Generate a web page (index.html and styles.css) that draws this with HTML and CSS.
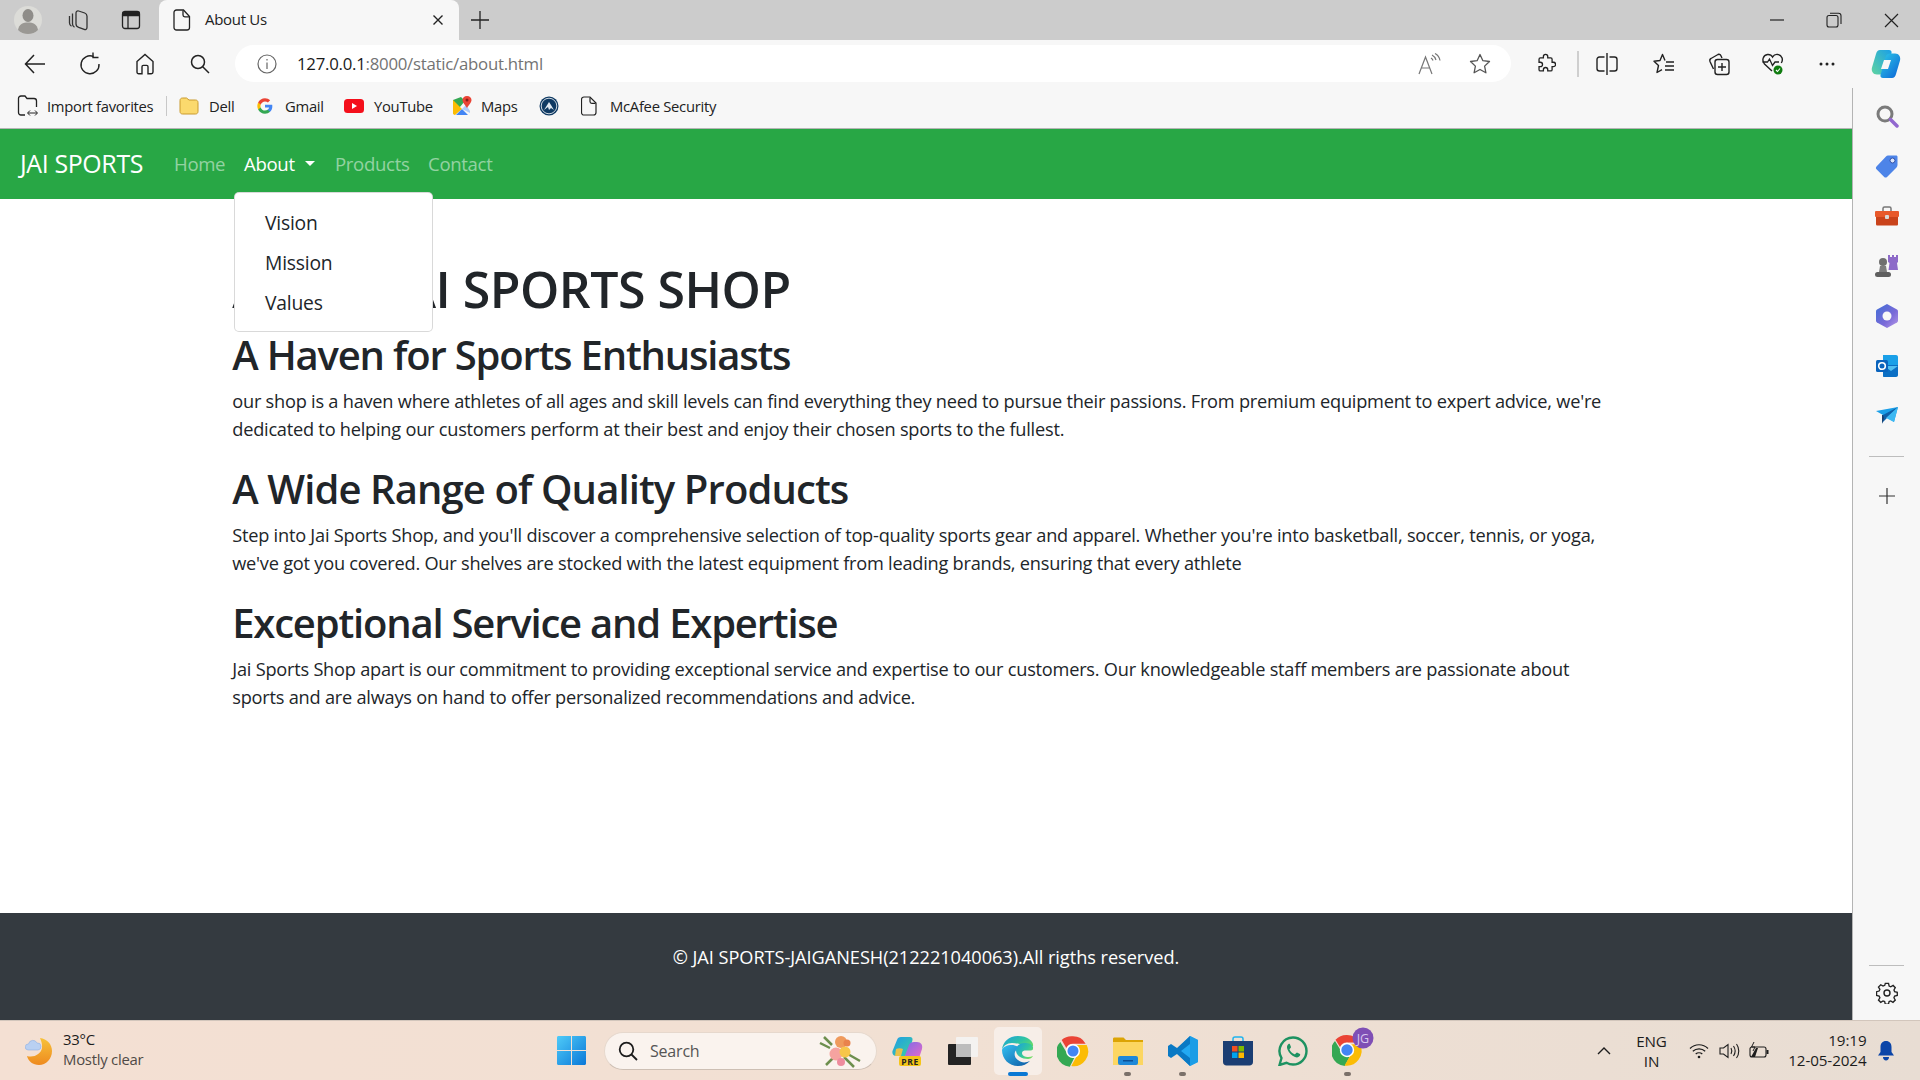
FILE: index.html
```html
<!DOCTYPE html>
<html lang="en">
<head>
<meta charset="utf-8">
<title>About Us</title>
<link rel="stylesheet" href="styles.css">
</head>
<body>
<div class="tabstrip">
  <div class="cell c50"><svg width="30" height="30" viewBox="0 0 30 30"><circle cx="15" cy="15" r="14" fill="#dcdcd8"/><ellipse cx="15" cy="10.5" rx="5.5" ry="6.5" fill="#8f8d89"/><path d="M5 25c1-6 5-7.500 10-7.500s9 1.500 10 7.500c-2.500 2.500-6 4-10 4s-7.500-1.500-10-4z" fill="#9a9894"/></svg></div>
  <div class="cell c50"><svg width="24" height="24" viewBox="0 0 24 24" fill="none" stroke="#333" stroke-width="1.300"><path d="M3.500 8v7c0 1.500.8 2.500 2 3.200"/><path d="M6.500 5.500v10.500c0 1.500.8 2.500 2 3.200"/><path d="M10 5c0-1.500 1.200-2.500 2.700-2l6 2c1.300.5 2.300 1.700 2.300 3.200v11c0 1.800-1.300 2.800-2.800 2.200l-5.500-2c-1.500-.6-2.700-1.800-2.700-3.400z"/></svg></div>
  <div class="cell c54"><svg width="20" height="20" viewBox="0 0 20 20" fill="none" stroke="#222" stroke-width="1.300"><rect x="1.500" y="1.500" width="17" height="17" rx="2.500"/><path d="M7 5.500v13"/><path d="M2 2.500h16v3H2z" fill="#222"/></svg></div>
  <div class="tab">
    <svg class="tab-doc" width="18" height="22" viewBox="0 0 18 22" fill="none" stroke="#222" stroke-width="1.300"><path d="M3.500 1h7l6 6.500v11c0 1.400-1 2.500-2.500 2.500H3.500C2 21 1 19.900 1 18.500v-15C1 2 2 1 3.500 1z"/><path d="M10 1.500V6c0 1 .8 1.800 1.800 1.800H16"/></svg>
    <span class="tab-title">About Us</span>
    <svg class="tab-close" width="12" height="12" viewBox="0 0 12 12" stroke="#222" stroke-width="1.400"><path d="M1.500 1.500l9 9M10.500 1.500l-9 9"/></svg>
  </div>
  <div class="cell new"><svg width="18" height="18" viewBox="0 0 18 18" stroke="#222" stroke-width="1.300"><path d="M9 0v18M0 9h18"/></svg></div>
  <div class="winctl">
    <div class="cell c57"><svg width="14" height="2" viewBox="0 0 14 2"><path d="M0 1h14" stroke="#222" stroke-width="1.200"/></svg></div>
    <div class="cell c57"><svg width="16" height="16" viewBox="0 0 16 16" fill="none" stroke="#222" stroke-width="1.100"><rect x="1" y="3.500" width="11" height="11.500" rx="2"/><path d="M4 1.200h8.500c1.400 0 2.500 1 2.500 2.500V12"/></svg></div>
    <div class="cell c58"><svg width="15" height="15" viewBox="0 0 15 15" stroke="#222" stroke-width="1.200"><path d="M1 1l13 13M14 1L1 14"/></svg></div>
  </div>
</div>

<div class="toolbar">
  <div class="cell c55"><svg width="22" height="20" viewBox="0 0 22 20" fill="none" stroke="#222" stroke-width="1.500"><path d="M10 1L1.500 10l8.500 9M1.500 10H21"/></svg></div>
  <div class="cell c55"><svg width="22" height="24" viewBox="0 0 22 24" fill="none" stroke="#222" stroke-width="1.400"><path d="M14.500 4.500A9 9 0 1 0 20 12"/><path d="M14 .5v5h5.500"/></svg></div>
  <div class="cell c55"><svg width="20" height="22" viewBox="0 0 20 22" fill="none" stroke="#222" stroke-width="1.400"><path d="M2 8.500L10 1.500l8 7V19c0 1-.7 1.700-1.700 1.700H13v-7c0-.8-.5-1.300-1.300-1.300H8.300c-.8 0-1.300.5-1.300 1.300v7H3.700C2.700 20.700 2 20 2 19z"/></svg></div>
  <div class="cell c55"><svg width="20" height="20" viewBox="0 0 20 20" fill="none" stroke="#222" stroke-width="1.500"><circle cx="8" cy="8" r="6.500"/><path d="M12.700 12.700L19 19"/></svg></div>
  <div class="address">
    <svg class="info" width="20" height="20" viewBox="0 0 20 20" fill="none" stroke="#666" stroke-width="1.200"><circle cx="10" cy="10" r="9"/><path d="M10 8.500v6.500M10 5v1.500"/></svg>
    <span class="url"><b>127.0.0.1</b>:8000/static/about.html</span>
    <svg class="read" width="24" height="22" viewBox="0 0 24 22" fill="none" stroke="#777" stroke-width="1.200"><path d="M1 21L7.500 4 14 21M3.500 15h8"/><path d="M14 2c2 1 3.500 3 4 5M17 .5c2.500 1.300 4.500 4 5 7M13 5c1 .6 1.700 1.400 2 2.500"/></svg>
    <svg class="fav" width="22" height="22" viewBox="0 0 22 22" fill="none" stroke="#555" stroke-width="1.300"><path d="M11 1.500l2.900 6.200 6.600.8-4.900 4.600 1.300 6.700L11 16.500l-5.900 3.300 1.300-6.700L1.500 8.500l6.600-.8z" stroke-linejoin="round"/></svg>
  </div>
  <div class="cell t-ext"><svg width="20" height="22" viewBox="1 0 23 23" fill="none" stroke="#222" stroke-width="1.500"><path d="M9.500 3a2.500 2.500 0 0 1 5 0v1.500h3.500A1.500 1.500 0 0 1 19.500 6v3.500H21a2.500 2.500 0 0 1 0 5h-1.500V18a1.500 1.500 0 0 1-1.500 1.500h-3.500V18a2.500 2.500 0 0 0-5 0v1.500H6A1.500 1.500 0 0 1 4.500 18v-3.500H6a2.500 2.500 0 0 0 0-5H4.500V6A1.500 1.500 0 0 1 6 4.500h3.500z"/></svg></div>
  <div class="tsep"></div>
  <div class="cell t-split"><svg width="22" height="22" viewBox="0 0 22 22" fill="none" stroke="#222" stroke-width="1.400"><path d="M11 0v22"/><path d="M8.500 4H3.500C2 4 1 5 1 6.500v9C1 17 2 18 3.500 18h5M13.500 4h5C20 4 21 5 21 6.500v9c0 1.500-1 2.500-2.500 2.500h-5"/></svg></div>
  <div class="cell t-favs"><svg width="22" height="22" viewBox="0 0 22 22" fill="none" stroke="#222" stroke-width="1.400"><path d="M12 7.500L9.500 1.500 7 7.500l-6 .7 4.500 4.300L4 19.500l5-2.800" stroke-linejoin="round"/><path d="M13 9h8M12 13h9M12 17h9"/></svg></div>
  <div class="cell t-coll"><svg width="22" height="24" viewBox="0 0 22 24" fill="none" stroke="#222" stroke-width="1.400"><path d="M5.500 17L2 9.500C1.500 8 2 7 3 6.500L10 2.500c1-.5 2.300 0 2.800 1L14 6"/><rect x="7" y="7.500" width="14" height="15" rx="2.500"/><path d="M14 11v8M10 15h8"/></svg></div>
  <div class="cell t-health"><svg width="24" height="24" viewBox="0 0 24 24" fill="none"><path d="M11 19L3.500 12C.5 8.500 2 3 6.500 2.500 9 2.300 11 4 11.500 5 12.500 3.500 14.500 2 17 2.500c4 .6 5.500 5 3.300 8.500" stroke="#222" stroke-width="1.400"/><path d="M1.500 10h5l2-3 3 6.500 2.500-3.500h4" stroke="#222" stroke-width="1.300"/><circle cx="17" cy="18" r="4.500" fill="#107c10"/><path d="M15 18l1.500 1.500 2.500-3" stroke="#fff" stroke-width="1.100"/></svg></div>
  <div class="cell t-more"><svg width="16" height="4" viewBox="0 0 16 4" fill="#222"><circle cx="2" cy="2" r="1.500"/><circle cx="8" cy="2" r="1.500"/><circle cx="14" cy="2" r="1.500"/></svg></div>
  <div class="cell t-cop"><svg width="30" height="32" viewBox="0 0 30 32"><defs><linearGradient id="cp1" x1="0" y1="0" x2="1" y2="1"><stop offset="0" stop-color="#2ecbe8"/><stop offset="1" stop-color="#0b62d6"/></linearGradient><linearGradient id="cp2" x1="0" y1="1" x2="1" y2="0"><stop offset="0" stop-color="#5fd4a0"/><stop offset="1" stop-color="#1a9fe8"/></linearGradient></defs><path d="M9 2h9c2 0 3 1.500 2.500 3L15 24c-.6 2-2 2.500-4 2.500H6C2 26.500 0 23 1 19.500L5 6C5.700 3.500 7 2 9 2z" fill="url(#cp2)"/><path d="M21 5.500h3c4 0 6 3.500 5 7L25 26c-.7 2.500-2 4-4 4h-9c-2 0-3-1.500-2.500-3L15 8c.6-2 3-2.500 6-2.500z" fill="url(#cp1)"/><path d="M13 12h7l-3 9h-7z" fill="#f7f7f7"/></svg></div>
</div>

<div class="workarea">
  <div class="page">
    <div class="favbar">
      <svg class="f-imp" width="22" height="22" viewBox="0 0 22 22" fill="none" stroke="#222" stroke-width="1.300"><path d="M8 20H4c-1.500 0-2.500-1-2.500-2.500v-14C1.500 2 2.500 1 4 1h4l2 2.500h7c1.500 0 2.500 1 2.500 2.500v6"/><path d="M11 18h9M13 15.500L10.500 18l2.500 2.500M18 15.500l2.500 2.500-2.500 2.500" stroke-width="1"/></svg>
      <span class="f-t w-imp">Import favorites</span>
      <i class="f-sep"></i>
      <svg class="f-dell" width="20" height="18" viewBox="0 0 20 18"><path d="M1 3.500C1 2 2 1 3.500 1h4L10 3h6.500C18 3 19 4 19 5.500v9c0 1.500-1 2.500-2.500 2.500h-13C2 17 1 16 1 14.500z" fill="#fbd96d" stroke="#c99a2e"/></svg>
      <span class="f-t w-dell">Dell</span>
      <svg class="f-g" width="16" height="16" viewBox="0 0 48 48"><path fill="#4285F4" d="M46 24.500c0-1.600-.1-3.100-.4-4.500H24v8.500h12.400c-.5 2.900-2.100 5.300-4.600 7v5.800h7.400c4.300-4 6.800-9.900 6.800-16.800z"/><path fill="#34A853" d="M24 47c6.200 0 11.400-2 15.200-5.600l-7.400-5.800c-2 1.400-4.700 2.200-7.800 2.200-6 0-11.100-4-12.900-9.500H3.400v5.900C7.200 41.800 15 47 24 47z"/><path fill="#FBBC05" d="M11.100 28.300c-.5-1.400-.7-2.800-.7-4.300s.3-2.900.7-4.300v-5.900H3.400C1.900 16.900 1 20.300 1 24s.9 7.100 2.400 10.200z"/><path fill="#EA4335" d="M24 10.200c3.400 0 6.400 1.200 8.800 3.400l6.600-6.600C35.400 3.300 30.200 1 24 1 15 1 7.200 6.200 3.400 13.800l7.700 5.900C12.900 14.200 18 10.200 24 10.200z"/></svg>
      <span class="f-t w-gm">Gmail</span>
      <svg class="f-yt" width="20" height="14" viewBox="0 0 20 14"><rect width="20" height="14" rx="3.500" fill="#f40f1b"/><path d="M8 4l5 3-5 3z" fill="#fff"/></svg>
      <span class="f-t w-yt">YouTube</span>
      <svg class="f-map" width="20" height="20" viewBox="0 0 20 20"><path d="M1 4l8-3 4 4L2 18 1 17z" fill="#34a853"/><path d="M1 4l9 9-7 6c-1 0-2-.8-2-2z" fill="#fbbc04"/><path d="M10 13l6 6H4z" fill="#4285f4"/><path d="M10 13l4-4 4 6v2z" fill="#aecbfa"/><path d="M15 0c2.800 0 4.500 2 4.500 4 0 3-3 5-4.500 8-1.500-3-4.500-5-4.500-8 0-2 1.700-4 4.500-4z" fill="#ea4335"/><circle cx="15" cy="4" r="1.500" fill="#8b1f17"/></svg>
      <span class="f-t w-map">Maps</span>
      <svg class="f-circ" width="20" height="20" viewBox="0 0 20 20"><circle cx="10" cy="10" r="9.500" fill="#0f3a63"/><circle cx="10" cy="10" r="7.800" fill="none" stroke="#fff" stroke-width=".8"/><path d="M5 14l5-8 2 3 3 5-3-2-2 2-1-3z" fill="#dfe8f0"/></svg>
      <svg class="f-doc" width="16" height="20" viewBox="0 0 16 20" fill="none" stroke="#222" stroke-width="1.200"><path d="M3 1h6l6 6v9.500c0 1.400-1 2.500-2.500 2.500H3c-1.400 0-2.500-1-2.500-2.500v-13C.5 2 1.600 1 3 1z"/><path d="M9 1.500V5.500c0 1 .7 1.800 1.800 1.800H14.500"/></svg>
      <span class="f-t w-mc">McAfee Security</span>
    </div>
    <nav class="navbar">
      <a class="brand">JAI SPORTS</a>
      <a class="nav-link link-home">Home</a>
      <a class="nav-link active link-about">About<i class="caret"></i></a>
      <a class="nav-link link-prod">Products</a>
      <a class="nav-link">Contact</a>
      <div class="dropdown">
        <a class="drop-item">Vision</a>
        <a class="drop-item">Mission</a>
        <a class="drop-item">Values</a>
      </div>
    </nav>
    <main class="content">
      <div class="container">
        <h1>About JAI SPORTS SHOP</h1>
        <h2>A Haven for Sports Enthusiasts</h2>
        <p>our shop is a haven where athletes of all ages and skill levels can find everything they need to pursue their passions. From premium equipment to expert advice, we're dedicated to helping our customers perform at their best and enjoy their chosen sports to the fullest.</p>
        <h2 class="h-wide">A Wide Range of Quality Products</h2>
        <p>Step into Jai Sports Shop, and you'll discover a comprehensive selection of top-quality sports gear and apparel. Whether you're into basketball, soccer, tennis, or yoga, we've got you covered. Our shelves are stocked with the latest equipment from leading brands, ensuring that every athlete</p>
        <h2>Exceptional Service and Expertise</h2>
        <p>Jai Sports Shop apart is our commitment to providing exceptional service and expertise to our customers. Our knowledgeable staff members are passionate about sports and are always on hand to offer personalized recommendations and advice.</p>
      </div>
    </main>
    <footer class="footer">© JAI SPORTS-JAIGANESH(212221040063).All rigths reserved.</footer>
  </div>
  <aside class="sidebar">
    <div class="side-top">
      <div class="side-i"><svg width="24" height="24" viewBox="0 0 24 24" fill="none"><circle cx="10" cy="10" r="7" stroke="#7b7b7b" stroke-width="3"/><path d="M15.500 15.500L22 22" stroke="#9268cf" stroke-width="3.500" stroke-linecap="round"/></svg></div>
      <div class="side-i"><svg width="24" height="24" viewBox="0 0 24 24"><path d="M13 1.500h8c1 0 1.500.5 1.500 1.500v8c0 1-.4 1.800-1 2.400L12 23c-.8.700-2 .7-2.800 0L1.500 15.300c-.8-.8-.8-2 0-2.800L11 2.500c.6-.6 1.200-1 2-1z" fill="#4d84e8"/><circle cx="17.500" cy="6.500" r="2.500" fill="#dbe6fb" stroke="#2f4fa8"/></svg></div>
      <div class="side-i"><svg width="24" height="20" viewBox="0 0 24 20"><path d="M8 5V2.500C8 1.500 8.500 1 9.500 1h5c1 0 1.500.5 1.500 1.500V5" fill="none" stroke="#777" stroke-width="1.500"/><rect y="5" width="24" height="6" rx="1" fill="#e8592b"/><path d="M1 11h22v7c0 1-.5 1.500-1.500 1.500h-19c-1 0-1.500-.5-1.500-1.500z" fill="#c9431b"/><rect x="10" y="9" width="4" height="4" rx="1" fill="#d9d9d9"/></svg></div>
      <div class="side-i"><svg width="24" height="24" viewBox="0 0 24 24"><path d="M13 1h2v2h2V1h2v2h2V1h2v7l-1 1 1 7H13.500l1-7-1.500-1z" fill="#8d6ac8"/><circle cx="8" cy="8" r="4" fill="#6f6f6f"/><path d="M5 12h6l1 6H4z" fill="#7d7d7d"/><rect x="0" y="18" width="16" height="5" rx="2.500" fill="#5f5f5f"/></svg></div>
      <div class="side-i"><svg width="22" height="24" viewBox="0 0 22 24"><defs><linearGradient id="m3" x1="0" y1="0" x2="1" y2="1"><stop offset="0" stop-color="#3f6ed6"/><stop offset=".6" stop-color="#7a6ad8"/><stop offset="1" stop-color="#b79ae8"/></linearGradient></defs><path d="M11 0l10 5.500c.7.400 1 1 1 1.800v9.400c0 .8-.3 1.400-1 1.800L11 24 1 18.500c-.7-.4-1-1-1-1.800V7.300c0-.8.300-1.400 1-1.800z" fill="url(#m3)"/><circle cx="11" cy="12" r="4.500" fill="#f7f7f7"/></svg></div>
      <div class="side-i"><svg width="22" height="22" viewBox="0 0 22 22"><path d="M7 0h13c1 0 2 .8 2 2v8L7 10z" fill="#1aa0e8"/><path d="M7 10l15 0v10c0 1-.8 2-2 2H8c-.8 0-1-.5-1-1z" fill="#0b6fc4"/><path d="M8 11l14 0-7 5z" fill="#50bff0"/><rect y="5" width="12" height="12" rx="1.500" fill="#0a64bd"/><circle cx="6" cy="11" r="3.300" fill="none" stroke="#fff" stroke-width="1.600"/></svg></div>
      <div class="side-i"><svg width="22" height="18" viewBox="0 0 22 18"><path d="M0 4l22-4-4 15L7 8z" fill="#1a9fe8"/><path d="M7 8L22 0 6 16z" fill="#0e5fa8"/><path d="M6 8l1 0 1 3-2 6z" fill="#173f6f"/><path d="M10 11l8 4L22 0z" fill="#3cb8f2"/></svg></div>
      <div class="side-div"></div>
      <div class="side-plus"><svg width="16" height="16" viewBox="0 0 16 16" stroke="#333" stroke-width="1.200"><path d="M8 0v16M0 8h16"/></svg></div>
    </div>
    <div class="side-bottom">
      <div class="side-div"></div>
      <div class="side-gear"><svg width="22" height="22" viewBox="0 0 22 22" fill="none" stroke="#222" stroke-width="1.400"><circle cx="11" cy="11" r="3"/><path d="M9.300 1.500h3.400l.6 2.800 1.700.8 2.500-1.400 2.300 2.400-1.400 2.400.7 1.800 2.800.7v3.300l-2.800.7-.7 1.700 1.400 2.400-2.400 2.400-2.400-1.500-1.700.7-.7 2.800h-3.300l-.7-2.800-1.700-.7-2.400 1.500-2.400-2.400 1.500-2.400-.8-1.700-2.700-.7V10.300l2.700-.7.800-1.800-1.500-2.400 2.400-2.400 2.400 1.400 1.800-.8z" transform="scale(.95) translate(.5 -.1)"/></svg></div>
    </div>
  </aside>
</div>

<div class="taskbar">
  <div class="weather">
    <svg width="28" height="30" viewBox="0 0 28 30"><defs><linearGradient id="mo" x1="0" y1="0" x2="0" y2="1"><stop offset="0" stop-color="#f7c23a"/><stop offset="1" stop-color="#ee8a1f"/></linearGradient></defs><path d="M15 2c7 1 12 6 12 13 0 8-6 14-13 14-6 0-11-4-12-9 7 2 14-2 15-8 .4-3-.5-7-2-10z" fill="url(#mo)"/><path d="M3 14a3 3 0 0 1 .5-6 4.500 4.500 0 0 1 8.500-1 3.500 3.500 0 0 1 1 7z" fill="#b9d0f2" stroke="#8fb0e3" stroke-width=".6"/></svg>
    <div class="w-text"><div class="w-temp">33°C</div><div class="w-desc">Mostly clear</div></div>
  </div>
  <div class="tb-center">
    <svg class="start" width="29" height="29" viewBox="0 0 29 29"><defs><linearGradient id="w1" x1="0" y1="0" x2="1" y2="1"><stop offset="0" stop-color="#4fcbf8"/><stop offset="1" stop-color="#0a78d8"/></linearGradient></defs><path d="M0 1.500C0 .6.600 0 1.500 0H14v14H0zM15 0h12.500c.9 0 1.500.6 1.500 1.500V14H15zM0 15h14v14H1.500C.6 29 0 28.400 0 27.500zM15 15h14v12.500c0 .9-.6 1.500-1.500 1.500H15z" fill="url(#w1)"/></svg>
    <div class="search">
      <svg width="20" height="20" viewBox="0 0 20 20" fill="none" stroke="#1c1c1c" stroke-width="1.800"><circle cx="8.500" cy="8.500" r="6.800"/><path d="M13.500 13.500L19 19"/></svg>
      <span class="search-t">Search</span>
      <svg class="flower" width="44" height="36" viewBox="0 0 44 36"><path d="M6 4l8 8M2 10l10 5M36 34l-10-10M42 28l-14-8M8 32l8-8" stroke="#6d8f4e" stroke-width="2.500"/><circle cx="23" cy="9" r="6" fill="#ef9a5c"/><circle cx="18" cy="21" r="6.500" fill="#f5a3a0"/><circle cx="27" cy="19" r="5.500" fill="#f7c64a"/><circle cx="23" cy="29" r="4" fill="#ee8c9e"/><circle cx="29" cy="10" r="3.500" fill="#e9824c"/></svg>
    </div>
    <div class="tb-app a-cop"><svg width="32" height="32" viewBox="0 0 32 32"><defs><linearGradient id="pa" x1="0" y1="0" x2="1" y2="1"><stop offset="0" stop-color="#1e9be8"/><stop offset="1" stop-color="#3dd0a0"/></linearGradient><linearGradient id="pb" x1="0" y1="0" x2="1" y2="1"><stop offset="0" stop-color="#7c6ce8"/><stop offset="1" stop-color="#e86ac8"/></linearGradient></defs><path d="M9 2h9c2 0 3 1.500 2.400 3.500L16 21H4c-3 0-4-3-3.500-5L5 5C5.500 3 7 2 9 2z" fill="url(#pa)"/><path d="M4 14c2-1 5-1 7 0l-2 7H3z" fill="#e8c14a"/><path d="M22 7h3c4 0 6 3 5 7l-3 9H12l5-13c.6-2 3-3 5-3z" fill="url(#pb)"/><rect x="7" y="21" width="22" height="10" rx="2" fill="#f5c518"/><text class="pre" x="18" y="29.500" text-anchor="middle">PRE</text></svg></div>
    <div class="tb-app a-stack"><svg width="30" height="30" viewBox="0 0 30 30"><rect x="0" y="8" width="23" height="21" rx="1" fill="#232323"/><rect x="8" y="1" width="22" height="20" rx="1" fill="#f4f2f0"/><rect x="8" y="8" width="15" height="13" fill="#bdbdbd"/></svg></div>
    <div class="tb-app a-edge"><svg width="32" height="32" viewBox="0 0 32 32"><defs><linearGradient id="e1" x1="0" y1="0" x2="1" y2="1"><stop offset="0" stop-color="#35c1f1"/><stop offset="1" stop-color="#0c59a4"/></linearGradient><linearGradient id="e2" x1="0" y1="0" x2="1" y2=".7"><stop offset="0" stop-color="#1b9de2"/><stop offset=".6" stop-color="#30c6a0"/><stop offset="1" stop-color="#6fdc5f"/></linearGradient></defs><path d="M16 1C7 1 .5 7 0 15c1-4 5-7 10-7 6 0 13 3 16 3h5C32 7 26 1 16 1z" fill="url(#e2)"/><path d="M0 15c0 9 7 16 16 16 5 0 9-2 12-5-4 2-9 2-12-1-3-2-4-5-3-8 1-2 3-4 5-4-3-2-6-3-8-3C5 10 .5 12 0 15z" fill="url(#e1)"/><path d="M31 14c1-5-4-6-9-6-4 0-8 3-8 7 0 6 6 9 12 9 2 0 4-1 5-3-4 2-11 1-11-3 0-2 2-2.500 4-2.500 3 0 7 .5 7-1.500z" fill="url(#e2)"/></svg></div>
    <div class="tb-app"><svg width="32" height="32" viewBox="0 0 48 48"><path d="M24 2a22 22 0 0 1 19 11H24a11 11 0 0 0-10 6.500L7 7.500A22 22 0 0 1 24 2z" fill="#ea4335"/><path d="M5 10.500l10 17a11 11 0 0 0 11 6.500l-6.800 13.500A22 22 0 0 1 5 10.500z" fill="#34a853"/><path d="M44.500 15a22 22 0 0 1-23 31.500L31 29a11 11 0 0 0-1.500-14z" fill="#fbbc05"/><circle cx="24" cy="24" r="10.500" fill="#fff"/><circle cx="24" cy="24" r="8.300" fill="#4285f4"/></svg></div>
    <div class="tb-app"><svg width="30" height="28" viewBox="0 0 30 28"><path d="M0 2c0-1 .5-1.500 1.500-1.500h9L13 3h17v5H0z" fill="#dca405"/><path d="M0 5h30v23H0z" fill="#fcd661"/><rect x="5" y="19" width="20" height="9" rx="2" fill="#1e88d8"/><rect x="10" y="23" width="10" height="1.500" fill="#0b4f95"/></svg></div>
    <div class="tb-app"><svg width="30" height="30" viewBox="0 0 30 30"><path d="M22 0l8 4v22l-8 4L7 15.500z" fill="#23a9f2"/><path d="M22 0L9 12 3 8 0 10v10l3 2 6-4 13 12V22L13 15l9-7z" fill="#0a79c4"/><path d="M22 0l8 4v22l-8 4z" fill="#1c9de6"/></svg></div>
    <div class="tb-app"><svg width="30" height="30" viewBox="0 0 30 30"><path d="M10 5V3c0-1 .6-2 2-2h6c1.400 0 2 1 2 2v2" fill="none" stroke="#21b4ee" stroke-width="1.500"/><path d="M0 5h30v21c0 2-1.500 3.500-3.500 3.500h-23C1.500 29.500 0 28 0 26z" fill="#1b3e73"/><rect x="9" y="10" width="5.500" height="5.500" fill="#f25022"/><rect x="15.500" y="10" width="5.500" height="5.500" fill="#7fba00"/><rect x="9" y="16.500" width="5.500" height="5.500" fill="#00a4ef"/><rect x="15.500" y="16.500" width="5.500" height="5.500" fill="#ffb900"/></svg></div>
    <div class="tb-app"><svg width="30" height="30" viewBox="0 0 30 30" fill="none"><path d="M15 1.500a13.500 13.500 0 0 1 0 27c-2.400 0-4.500-.6-6.500-1.700L1.500 29l2-7A13.500 13.500 0 0 1 15 1.500z" stroke="#1d9261" stroke-width="2.400"/><path d="M10.500 8c-1.500 1-2 3-1 5.500 1.500 3.500 4 6 7.500 7.500 2.500 1 4 0 5-1.500.3-.7.300-1.300 0-1.600l-3-1.400c-.5 0-1 .8-1.700 1.500-.4.300-.8.300-1.300 0-2-1-3.500-2.500-4.500-4.500 0-.5.600-1 1.300-1.800.2-.4.200-.8 0-1.200L11.800 8c-.3-.3-.8-.3-1.300 0z" fill="#1d9261"/></svg></div>
    <div class="tb-app a-chr2"><svg width="42" height="40" viewBox="0 0 42 40"><g transform="translate(0 8)"><path d="M15 0a15 15 0 0 1 13 7.500H15a7.500 7.500 0 0 0-7 4.500L3.500 4.800A15 15 0 0 1 15 0z" fill="#ea4335"/><path d="M3 6l7 11.500a7.500 7.500 0 0 0 7.500 4.500L12.800 31A15 15 0 0 1 3 6z" fill="#34a853"/><path d="M28 9a15 15 0 0 1-15.500 21.500L19.200 19a7.500 7.500 0 0 0-1-9.500z" fill="#fbbc05"/><circle cx="15" cy="15" r="7.200" fill="#fff"/><circle cx="15" cy="15" r="5.700" fill="#4285f4"/></g><circle cx="31" cy="11" r="10.500" fill="#7f4fb5"/><text class="jg" x="31" y="15.500" text-anchor="middle">JG</text></svg></div>
  </div>
  <div class="tray">
    <svg class="chev" width="14" height="8" viewBox="0 0 14 8" fill="none" stroke="#1c1c1c" stroke-width="1.400"><path d="M1 7l6-6 6 6"/></svg>
    <div class="lang"><div>ENG</div><div>IN</div></div>
    <svg class="wifi" width="20" height="16" viewBox="0 0 20 16" fill="none" stroke="#1c1c1c" stroke-width="1.200"><path d="M1 5.500c5-5 13-5 18 0M3.800 8.300c3.500-3.300 9-3.300 12.400 0M6.700 11c1.800-1.600 4.800-1.600 6.600 0"/><circle cx="10" cy="14" r="1.300" fill="#1c1c1c" stroke="none"/></svg>
    <svg class="vol" width="21" height="18" viewBox="0 0 21 18" fill="none" stroke="#1c1c1c" stroke-width="1.100"><path d="M1 6h3.500L9 2.500v13L4.500 12H1z"/><path d="M12 6c1 1.800 1 4.200 0 6M14.500 4c2 3 2 7 0 10M17.500 2c3 4 3 10 0 14"/></svg>
    <svg class="batt" width="20" height="18" viewBox="0 0 20 18" fill="none"><rect x="1" y="5" width="16" height="10" rx="2" stroke="#1c1c1c" stroke-width="1.100"/><rect x="17.500" y="8" width="2" height="4" fill="#1c1c1c"/><path d="M2 15h4l3-9H7z" fill="#1c1c1c"/><path d="M5 0L2.500 5H6L4 9" stroke="#1c1c1c" stroke-width="1"/></svg>
    <div class="clock"><div>19:19</div><div>12-05-2024</div></div>
    <svg class="bell" width="16" height="20" viewBox="0 0 16 20"><path d="M8 0c3.500 0 5.500 2.500 5.500 6v5l2.500 3.500H0L2.500 11V6C2.500 2.500 4.500 0 8 0z" fill="#0b45a8"/><path d="M5 16h6c0 2-1.300 3.500-3 3.500S5 18 5 16z" fill="#0b45a8"/></svg>
  </div>
</div>
</body>
</html>
```
FILE: styles.css
```css
* { box-sizing: border-box; }
html, body { margin: 0; height: 100%; }
body {
  width: 1920px;
  height: 1080px;
  overflow: hidden;
  display: flex;
  flex-direction: column;
  font-family: "Open Sans", "Noto Sans", sans-serif;
  color: #212529;
  background: #fff;
}
svg { display: block; flex: none; }
.cell { display: flex; align-items: center; justify-content: center; flex: none; height: 100%; }
.c50 { width: 50px; }
.c54 { width: 56px; }
.c55 { width: 55px; }
.c57 { width: 57px; }
.c58 { width: 58px; }

.tabstrip { height: 40px; flex: none; display: flex; align-items: stretch; background: #cccccc; padding-left: 3px; }
.tab {
  width: 300px; background: #f7f7f7; border-radius: 8px 8px 0 0;
  display: flex; align-items: center; padding: 0 15px 0 14px; flex: none;
}
.tab-title { font-size: 15px; letter-spacing: -.3px; margin: 0 0 2px 14px; color: #222; flex: 1; }
.new { width: 42px; }
.winctl { margin-left: auto; display: flex; height: 100%; width: 172px; }

.toolbar { height: 48px; flex: none; display: flex; align-items: center; background: #f7f7f7; padding-left: 7.5px; padding-bottom: 1px; }
.toolbar .cell { height: 47px; }
.address {
  margin-left: 7.5px; width: 1276px; height: 37px; border-radius: 19px; background: #fff; flex: none;
  display: flex; align-items: center; padding-left: 22px;
}
.url { font-size: 16.8px; letter-spacing: -.25px; color: #737373; margin: 0 0 1px 20px; flex: 1; }
.url b { font-weight: 400; color: #1a1a1a; }
.read { margin-right: 27px; }
.fav { margin-right: 20px; }
.t-ext { width: 63px; margin-left: 3px; }
.tsep { width: 2px; height: 26px; background: #cfcfcf; flex: none; }
.t-split { width: 56px; }
.t-favs { width: 58px; }
.t-coll { width: 52px; }
.t-health { width: 56px; }
.t-more { width: 52px; }
.t-cop { width: 66px; }

.workarea { flex: 1; display: flex; min-height: 0; }
.page { width: 1852px; flex: none; display: flex; flex-direction: column; }
.favbar { height: 41px; flex: none; background: #f7f7f7; display: flex; align-items: center; padding: 0 0 5px 17px; border-bottom: 1px solid #b5b5b5; }
.f-t { font-size: 14.8px; letter-spacing: -.28px; color: #222; white-space: nowrap; flex: none; }
.f-imp { margin-right: 8px; }
.w-imp { width: 106px; }
.f-sep { width: 1px; height: 20px; background: #c8c8c8; margin: 0 12px 0 13px; }
.f-dell { margin-right: 10px; }
.w-dell { width: 25px; }
.f-g { margin: 0 12px 0 23px; }
.w-gm { width: 37px; }
.f-yt { margin: 0 10px 0 22px; }
.w-yt { width: 57px; }
.f-map { margin: 0 9px 0 21px; }
.w-map { width: 37px; }
.f-circ { margin-left: 21px; }
.f-doc { margin: 0 13px 0 22px; }

.navbar { height: 70px; flex: none; background: #28a745; display: flex; align-items: center; padding: 0 0 2px 20px; position: relative; }
.brand { font-size: 24.9px; letter-spacing: -.35px; color: #fff; width: 154px; }
.nav-link { font-size: 18.6px; letter-spacing: -.33px; color: rgba(255,255,255,.5); }
.link-home { width: 70px; }
.link-about { width: 91px; display: flex; align-items: center; }
.link-about.active { color: #fff; }
.link-prod { width: 93px; }
.caret { width: 0; height: 0; border-top: 5px solid #fff; border-left: 5px solid transparent; border-right: 5px solid transparent; margin-left: 10px; }
.dropdown {
  position: absolute; left: 234px; top: 63px; width: 199px; height: 140px; padding: 10px 0;
  background: #fff; border: 1px solid rgba(0,0,0,.15); border-radius: 5px; z-index: 5;
}
.drop-item { display: block; height: 40px; line-height: 40px; padding-left: 30px; font-size: 19.3px; letter-spacing: -.2px; color: #212529; }

.content { flex: 1; min-height: 0; }
.container { width: 1425px; margin: 0 auto; padding: 60px 18.750px 0; }
h1 { margin: 0 0 11.500px; font-size: 50px; line-height: 60px; font-weight: 600; letter-spacing: -.5px; white-space: nowrap; }
h2 { margin: 0 0 8px; font-size: 40px; line-height: 48px; font-weight: 600; letter-spacing: -1.200px; white-space: nowrap; }
h2.h-wide { letter-spacing: -.9px; }
p { margin: 0 0 21.800px; font-size: 18.200px; line-height: 28.200px; letter-spacing: -.23px; }
.footer { height: 107px; flex: none; background: #343a40; color: #fff; display: flex; align-items: center; justify-content: center; padding-bottom: 19px; font-size: 18.200px; letter-spacing: -.05px; }

.sidebar { width: 68px; flex: none; background: #f7f7f7; border-left: 1px solid #b4b4b4; display: flex; flex-direction: column; justify-content: space-between; }
.side-top { display: flex; flex-direction: column; align-items: center; padding-top: 3px; }
.side-i { height: 50px; width: 100%; display: flex; align-items: center; justify-content: center; }
.side-div { width: 35px; height: 1px; background: #bdbdbd; margin: 15px auto 0; }
.side-plus { margin-top: 31px; }
.side-bottom { display: flex; flex-direction: column; align-items: center; padding-bottom: 16px; }
.side-bottom .side-div { margin: 0 auto 16px; }

.taskbar { height: 60px; flex: none; display: flex; align-items: center; border-top: 1px solid #d2c6bc; background: linear-gradient(90deg, #f4e0d3, #f1e0d3 50%, #e8ddd3); position: relative; }
.weather { display: flex; align-items: center; width: 557px; padding-left: 25px; flex: none; gap: 10px; }
.w-text { font-size: 14.900px; line-height: 20px; letter-spacing: -.25px; margin-bottom: 3px; }
.w-temp { color: #1c1c1c; }
.w-desc { color: #4f4a46; }
.tb-center { display: flex; align-items: center; flex: none; }
.search { width: 273px; height: 38px; margin: 0 3px 0 18px; background: #faf3ee; border: 1px solid #e6d8cd; border-bottom-color: #cdbfb4; border-radius: 19px; display: flex; align-items: center; padding-left: 13px; }
.search-t { font-size: 16px; letter-spacing: -.2px; color: #555; margin-left: 12px; flex: 1; }
.flower { margin-right: 14px; }
.tb-app { width: 55px; height: 48px; display: flex; align-items: center; justify-content: center; position: relative; flex: none; border-radius: 5px; }
.a-edge { background: #f7eee8; width: 48px; margin: 0 3.500px; }
.a-edge::after { content: ""; position: absolute; bottom: -1px; left: 14px; width: 20px; height: 4px; border-radius: 2px; background: #0a78d4; }
.tb-app:nth-child(7)::after, .tb-app:nth-child(8)::after, .a-chr2::after { content: ""; position: absolute; bottom: -1px; left: 24px; width: 7px; height: 4px; border-radius: 2px; background: #7a7069; }
.a-chr2 svg { margin-left: 11px; margin-top: -7px; }
.pre { font: 700 8.500px "Open Sans", sans-serif; fill: #222; letter-spacing: .6px; }
.jg { font: 400 12.500px "Open Sans", sans-serif; fill: #d9c8ee; }
.tray { position: absolute; right: 0; top: 0; bottom: 0; width: 325px; display: flex; align-items: center; color: #1c1c1c; font-size: 15.200px; }
.chev { margin-left: 2px; }
.lang { width: 60px; margin-left: 10.500px; text-align: center; line-height: 20px; letter-spacing: -.1px; }
.wifi { margin-left: 7px; }
.vol { margin-left: 10px; }
.batt { margin-left: 9px; }
.clock { width: 98px; text-align: right; line-height: 20px; letter-spacing: -.1px; margin-bottom: 2px; }
.bell { margin-left: 11px; }
```
